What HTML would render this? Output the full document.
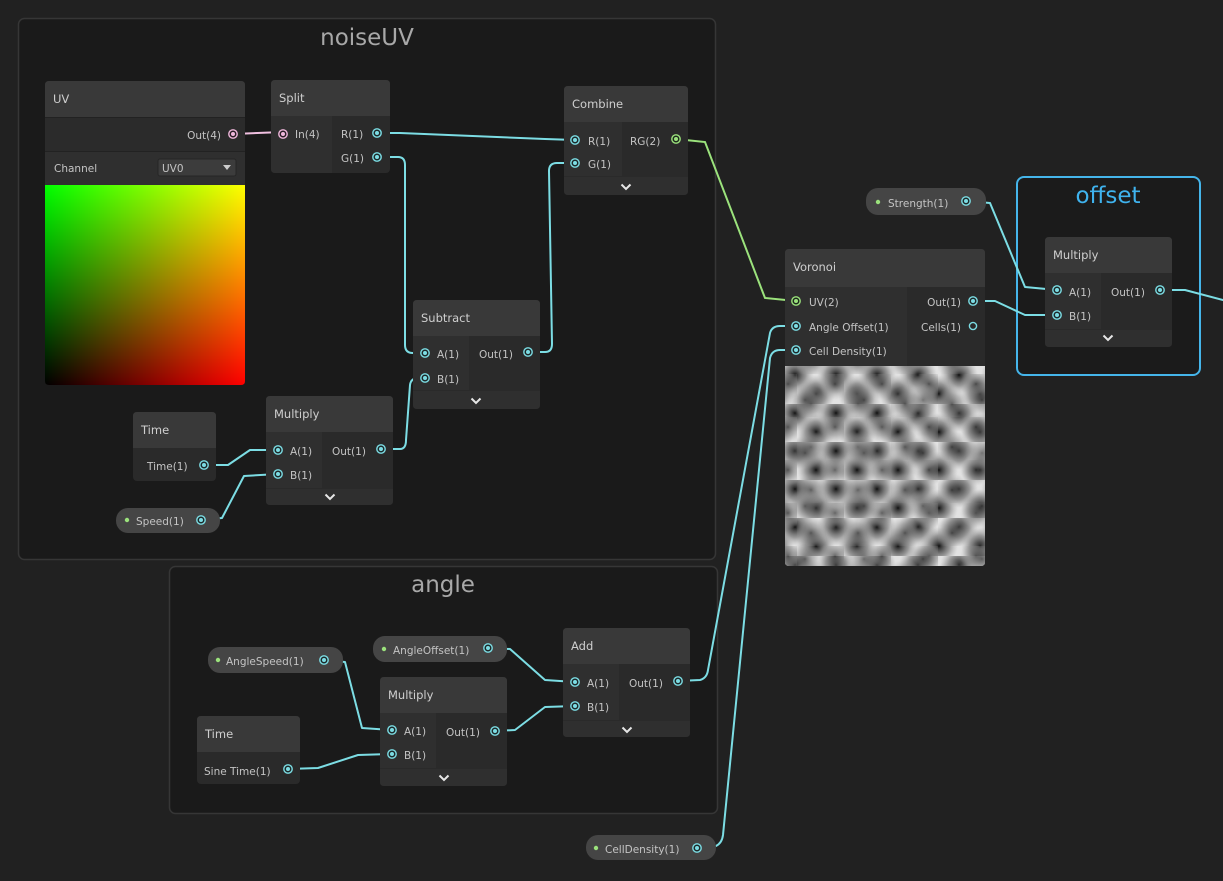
<!DOCTYPE html>
<html><head><meta charset="utf-8"><style>
html,body{margin:0;padding:0;background:#212121;}
svg{display:block;}
text{font-family:"DejaVu Sans","Liberation Sans",sans-serif;}
.h{font-size:11.5px;fill:#cfcfcf;}
.t{font-size:10.5px;fill:#c4c4c4;}
.w{fill:none;stroke:#7cdde4;stroke-width:2;stroke-linejoin:round;stroke-linecap:round;}
</style></head><body>
<svg width="1223" height="881" viewBox="0 0 1223 881" xmlns="http://www.w3.org/2000/svg">
<defs>
<symbol id="pc" viewBox="-6 -6 12 12"><circle r="4.2" fill="#1e2a2b" stroke="#7cdde4" stroke-width="1.4"/><circle r="2" fill="#7cdde4"/></symbol>
<symbol id="pg" viewBox="-6 -6 12 12"><circle r="4.2" fill="#1e2a1e" stroke="#9be27c" stroke-width="1.4"/><circle r="2" fill="#9be27c"/></symbol>
<symbol id="pp" viewBox="-6 -6 12 12"><circle r="4.2" fill="#2a1e26" stroke="#f0b8dc" stroke-width="1.4"/><circle r="2" fill="#f0b8dc"/></symbol>
<symbol id="ch" viewBox="0 0 12 8"><path d="M1.5 1.5 L6 6 L10.5 1.5" fill="none" stroke="#e6e6e6" stroke-width="2"/></symbol>
<linearGradient id="gh" x1="0" x2="1" y1="0" y2="0"><stop offset="0" stop-color="#000"/><stop offset="1" stop-color="#ff0000"/></linearGradient>
<linearGradient id="gv" x1="0" x2="0" y1="0" y2="1"><stop offset="0" stop-color="#00ff00"/><stop offset="1" stop-color="#000"/></linearGradient>
<radialGradient id="rd"><stop offset="0" stop-color="#111"/><stop offset="0.1" stop-color="#333"/><stop offset="0.55" stop-color="#777" stop-opacity="0.7"/><stop offset="1" stop-color="#aaa" stop-opacity="0"/></radialGradient>
<pattern id="vp1" x="785" y="366" width="41" height="38" patternUnits="userSpaceOnUse"><circle cx="10" cy="9" r="19" fill="url(#rd)"/><circle cx="31" cy="28" r="19" fill="url(#rd)"/><circle cx="51" cy="9" r="19" fill="url(#rd)"/><circle cx="-10" cy="28" r="19" fill="url(#rd)"/></pattern>
<pattern id="vp2" x="797" y="374" width="47" height="43" patternUnits="userSpaceOnUse"><circle cx="14" cy="30" r="17" fill="url(#rd)"/><circle cx="38" cy="10" r="16" fill="url(#rd)"/></pattern>
<pattern id="vp3" x="780" y="380" width="59" height="53" patternUnits="userSpaceOnUse"><circle cx="25" cy="20" r="17" fill="url(#rd)"/></pattern>
<clipPath id="vc"><path d="M785 366 H985 V562 Q985 566 981 566 H789 Q785 566 785 562 Z"/></clipPath>
<clipPath id="uvc"><path d="M45 185 H245 V381 Q245 385 241 385 H49 Q45 385 45 381 Z"/></clipPath>
</defs>

<rect x="18.5" y="18.5" width="697" height="541" rx="6" fill="#1a1a1a" stroke="#363636" stroke-width="1.5"/>
<text x="367" y="45" text-anchor="middle" font-size="23" fill="#a8a8a8">noiseUV</text>
<rect x="169.5" y="566.5" width="548" height="247" rx="6" fill="#1a1a1a" stroke="#363636" stroke-width="1.5"/>
<text x="443" y="592" text-anchor="middle" font-size="23" fill="#a8a8a8">angle</text>
<rect x="1017" y="177" width="183" height="198" rx="7" fill="#1b1b1b" stroke="#45b5ea" stroke-width="2"/>
<text x="1108" y="203" text-anchor="middle" font-size="23" fill="#3fb3ee">offset</text>

<path d="M233 134 L283 132" fill="none" stroke="#f0c0e0" stroke-width="2"/>
<path class="w" d="M377 133 L400 133 L545 139 L575 140"/>
<path class="w" d="M377 157 L398 157 Q405 157 405 165 L405 345 Q405 353 413 353 L425 353"/>
<path class="w" d="M528 352 L545 352 Q552 352 552 344 L549 171 Q549 163 557 163 L575 163"/>
<path class="w" d="M204 465 L228 465 L250 450 L278 450"/>
<path class="w" d="M201 520 L222 518 L244 476 L278 474"/>
<path class="w" d="M381 449 L400 449 Q406 449 406 440 L410 385 Q411 378 418 378 L425 378"/>
<path fill="none" stroke="#9be27c" stroke-width="2" d="M676 139 L705 142 L765 298 L796 301"/>
<path class="w" d="M678 681 L700 680 Q707 678 708 670 L770 333 Q772 326 780 326 L796 326"/>
<path class="w" d="M697 848 L716 846 Q722 843 723 835 L770 358 Q772 350 780 350 L796 350"/>
<path class="w" d="M973 301 L995 301 L1025 315 L1057 315"/>
<path class="w" d="M966 201 L990 203 L1025 287 L1057 290"/>
<path class="w" d="M1160 290 L1185 290 L1223 300"/>
<path class="w" d="M324 660 L345 662 L362 728 L392 730"/>
<path class="w" d="M288 769 L318 768 L358 755 L392 754"/>
<path class="w" d="M488 648 L510 649 L545 680 L575 682"/>
<path class="w" d="M495 731 L515 730 L545 707 L575 706"/>

<!-- UV node -->
<rect x="45" y="81" width="200" height="304" rx="4" fill="#2b2b2b"/>
<path d="M45 117 V85 Q45 81 49 81 H241 Q245 81 245 85 V117 Z" fill="#393939"/>
<rect x="45" y="117" width="200" height="1" fill="#222"/>
<rect x="45" y="151" width="200" height="34" fill="#2f2f2f"/>
<rect x="45" y="151" width="200" height="1" fill="#222"/>
<text class="h" x="53" y="103">UV</text>
<text class="t" x="221" y="139" text-anchor="end">Out(4)</text>
<use href="#pp" x="227" y="128" width="12" height="12"/>
<text class="t" x="54" y="172">Channel</text>
<rect x="158" y="159" width="78" height="17" rx="2" fill="#3c3c3c" stroke="#262626"/>
<text class="t" x="162" y="172" fill="#e0e0e0">UV0</text>
<path d="M223 165 L231 165 L227 170 Z" fill="#ccc"/>
<g clip-path="url(#uvc)">
<rect x="45" y="185" width="200" height="200" fill="url(#gh)"/>
<rect x="45" y="185" width="200" height="200" fill="url(#gv)" style="mix-blend-mode:screen"/>
</g>

<!-- Split -->
<rect x="271" y="80" width="119" height="93" rx="4" fill="#2a2a2a"/>
<path d="M271 116 V84 Q271 80 275 80 H386 Q390 80 390 84 V116 Z" fill="#393939"/>
<path d="M271 116 H332 V173 H275 Q271 173 271 169 Z" fill="#2f2f2f"/>
<text class="h" x="279" y="102">Split</text>
<use href="#pp" x="277" y="128" width="12" height="12"/><text class="t" x="295" y="138">In(4)</text>
<text class="t" x="341" y="138">R(1)</text><use href="#pc" x="371" y="127" width="12" height="12"/>
<text class="t" x="341" y="162">G(1)</text><use href="#pc" x="371" y="151" width="12" height="12"/>

<!-- Combine -->
<rect x="564" y="86" width="124" height="109" rx="4" fill="#2a2a2a"/>
<path d="M564 122 V90 Q564 86 568 86 H684 Q688 86 688 90 V122 Z" fill="#393939"/>
<rect x="564" y="122" width="58" height="54" fill="#2f2f2f"/>
<path d="M564 177 H688 V191 Q688 195 684 195 H568 Q564 195 564 191 Z" fill="#2f2f2f"/>
<text class="h" x="572" y="108">Combine</text>
<use href="#pc" x="569" y="134" width="12" height="12"/><text class="t" x="588" y="145">R(1)</text>
<use href="#pc" x="569" y="157" width="12" height="12"/><text class="t" x="588" y="168">G(1)</text>
<text class="t" x="630" y="145">RG(2)</text><use href="#pg" x="670" y="133" width="12" height="12"/>
<use href="#ch" x="620" y="183" width="12" height="8"/>

<!-- Subtract -->
<rect x="413" y="300" width="127" height="109" rx="4" fill="#2a2a2a"/>
<path d="M413 336 V304 Q413 300 417 300 H536 Q540 300 540 304 V336 Z" fill="#393939"/>
<rect x="413" y="336" width="56" height="54" fill="#2f2f2f"/>
<path d="M413 391 H540 V405 Q540 409 536 409 H417 Q413 409 413 405 Z" fill="#2f2f2f"/>
<text class="h" x="421" y="322">Subtract</text>
<use href="#pc" x="419" y="347" width="12" height="12"/><text class="t" x="437" y="358">A(1)</text>
<use href="#pc" x="419" y="372" width="12" height="12"/><text class="t" x="437" y="383">B(1)</text>
<text class="t" x="479" y="358">Out(1)</text><use href="#pc" x="522" y="346" width="12" height="12"/>
<use href="#ch" x="470" y="397" width="12" height="8"/>

<!-- Time -->
<rect x="133" y="412" width="83" height="69" rx="4" fill="#2a2a2a"/>
<path d="M133 448 V416 Q133 412 137 412 H212 Q216 412 216 416 V448 Z" fill="#393939"/>
<text class="h" x="141" y="434">Time</text>
<text class="t" x="147" y="470">Time(1)</text><use href="#pc" x="198" y="459" width="12" height="12"/>

<!-- Multiply noise -->
<rect x="266" y="396" width="127" height="109" rx="4" fill="#2a2a2a"/>
<path d="M266 432 V400 Q266 396 270 396 H389 Q393 396 393 400 V432 Z" fill="#393939"/>
<rect x="266" y="432" width="56" height="56" fill="#2f2f2f"/>
<path d="M266 489 H393 V501 Q393 505 389 505 H270 Q266 505 266 501 Z" fill="#2f2f2f"/>
<text class="h" x="274" y="418">Multiply</text>
<use href="#pc" x="272" y="444" width="12" height="12"/><text class="t" x="290" y="455">A(1)</text>
<use href="#pc" x="272" y="468" width="12" height="12"/><text class="t" x="290" y="479">B(1)</text>
<text class="t" x="332" y="455">Out(1)</text><use href="#pc" x="375" y="443" width="12" height="12"/>
<use href="#ch" x="324" y="493" width="12" height="8"/>

<rect x="116" y="508" width="104" height="25" rx="12" fill="#454545"/>
<circle cx="127" cy="520" r="2.2" fill="#9be27c"/>
<text class="t" x="136" y="525">Speed(1)</text><use href="#pc" x="195" y="514" width="12" height="12"/>

<!-- Voronoi -->
<rect x="785" y="249" width="200" height="317" rx="4" fill="#2a2a2a"/>
<path d="M785 287 V253 Q785 249 789 249 H981 Q985 249 985 253 V287 Z" fill="#393939"/>
<rect x="785" y="287" width="122" height="79" fill="#2f2f2f"/>
<text class="h" x="793" y="271">Voronoi</text>
<use href="#pg" x="790" y="295" width="12" height="12"/><text class="t" x="809" y="306">UV(2)</text>
<use href="#pc" x="790" y="320" width="12" height="12"/><text class="t" x="809" y="331">Angle Offset(1)</text>
<use href="#pc" x="790" y="344" width="12" height="12"/><text class="t" x="809" y="355">Cell Density(1)</text>
<text class="t" x="961" y="306" text-anchor="end">Out(1)</text><use href="#pc" x="967" y="295" width="12" height="12"/>
<text class="t" x="961" y="331" text-anchor="end">Cells(1)</text><circle cx="973" cy="326" r="3.6" fill="none" stroke="#7cdde4" stroke-width="1.4"/>
<g clip-path="url(#vc)">
<rect x="785" y="366" width="200" height="200" fill="#e2e2e2"/>
<rect x="785" y="366" width="200" height="200" fill="url(#vp1)"/>
<rect x="785" y="366" width="200" height="200" fill="url(#vp2)" opacity="0.6"/>
<rect x="785" y="366" width="200" height="200" fill="url(#vp3)" opacity="0.5"/>
</g>

<rect x="866" y="188" width="120" height="27" rx="12" fill="#454545"/>
<circle cx="878" cy="202" r="2.2" fill="#9be27c"/>
<text class="t" x="888" y="207">Strength(1)</text><use href="#pc" x="960" y="195" width="12" height="12"/>

<!-- Multiply offset -->
<rect x="1045" y="237" width="127" height="110" rx="4" fill="#2a2a2a"/>
<path d="M1045 273 V241 Q1045 237 1049 237 H1168 Q1172 237 1172 241 V273 Z" fill="#393939"/>
<rect x="1045" y="273" width="56" height="56" fill="#2f2f2f"/>
<path d="M1045 330 H1172 V343 Q1172 347 1168 347 H1049 Q1045 347 1045 343 Z" fill="#2f2f2f"/>
<text class="h" x="1053" y="259">Multiply</text>
<use href="#pc" x="1051" y="284" width="12" height="12"/><text class="t" x="1069" y="296">A(1)</text>
<use href="#pc" x="1051" y="309" width="12" height="12"/><text class="t" x="1069" y="320">B(1)</text>
<text class="t" x="1111" y="296">Out(1)</text><use href="#pc" x="1154" y="284" width="12" height="12"/>
<use href="#ch" x="1102" y="334" width="12" height="8"/>

<rect x="208" y="647" width="135" height="26" rx="12" fill="#454545"/>
<circle cx="218" cy="660" r="2.2" fill="#9be27c"/>
<text class="t" x="226" y="665">AngleSpeed(1)</text><use href="#pc" x="318" y="654" width="12" height="12"/>

<rect x="373" y="636" width="134" height="26" rx="12" fill="#454545"/>
<circle cx="384" cy="649" r="2.2" fill="#9be27c"/>
<text class="t" x="393" y="654">AngleOffset(1)</text><use href="#pc" x="482" y="642" width="12" height="12"/>

<!-- Add -->
<rect x="563" y="628" width="127" height="109" rx="4" fill="#2a2a2a"/>
<path d="M563 664 V632 Q563 628 567 628 H686 Q690 628 690 632 V664 Z" fill="#393939"/>
<rect x="563" y="664" width="56" height="56" fill="#2f2f2f"/>
<path d="M563 721 H690 V733 Q690 737 686 737 H567 Q563 737 563 733 Z" fill="#2f2f2f"/>
<text class="h" x="571" y="650">Add</text>
<use href="#pc" x="569" y="676" width="12" height="12"/><text class="t" x="587" y="687">A(1)</text>
<use href="#pc" x="569" y="700" width="12" height="12"/><text class="t" x="587" y="711">B(1)</text>
<text class="t" x="629" y="687">Out(1)</text><use href="#pc" x="672" y="675" width="12" height="12"/>
<use href="#ch" x="621" y="726" width="12" height="8"/>

<!-- Multiply angle -->
<rect x="380" y="677" width="127" height="109" rx="4" fill="#2a2a2a"/>
<path d="M380 713 V681 Q380 677 384 677 H503 Q507 677 507 681 V713 Z" fill="#393939"/>
<rect x="380" y="713" width="56" height="55" fill="#2f2f2f"/>
<path d="M380 769 H507 V782 Q507 786 503 786 H384 Q380 786 380 782 Z" fill="#2f2f2f"/>
<text class="h" x="388" y="699">Multiply</text>
<use href="#pc" x="386" y="724" width="12" height="12"/><text class="t" x="404" y="735">A(1)</text>
<use href="#pc" x="386" y="748" width="12" height="12"/><text class="t" x="404" y="759">B(1)</text>
<text class="t" x="446" y="736">Out(1)</text><use href="#pc" x="489" y="725" width="12" height="12"/>
<use href="#ch" x="438" y="774" width="12" height="8"/>

<rect x="197" y="716" width="103" height="68" rx="4" fill="#2a2a2a"/>
<path d="M197 752 V720 Q197 716 201 716 H296 Q300 716 300 720 V752 Z" fill="#393939"/>
<text class="h" x="205" y="738">Time</text>
<text class="t" x="204" y="775">Sine Time(1)</text><use href="#pc" x="282" y="763" width="12" height="12"/>

<rect x="586" y="835" width="130" height="25" rx="12" fill="#454545"/>
<circle cx="596" cy="848" r="2.2" fill="#9be27c"/>
<text class="t" x="605" y="853">CellDensity(1)</text><use href="#pc" x="691" y="842" width="12" height="12"/>
</svg>
</body></html>
